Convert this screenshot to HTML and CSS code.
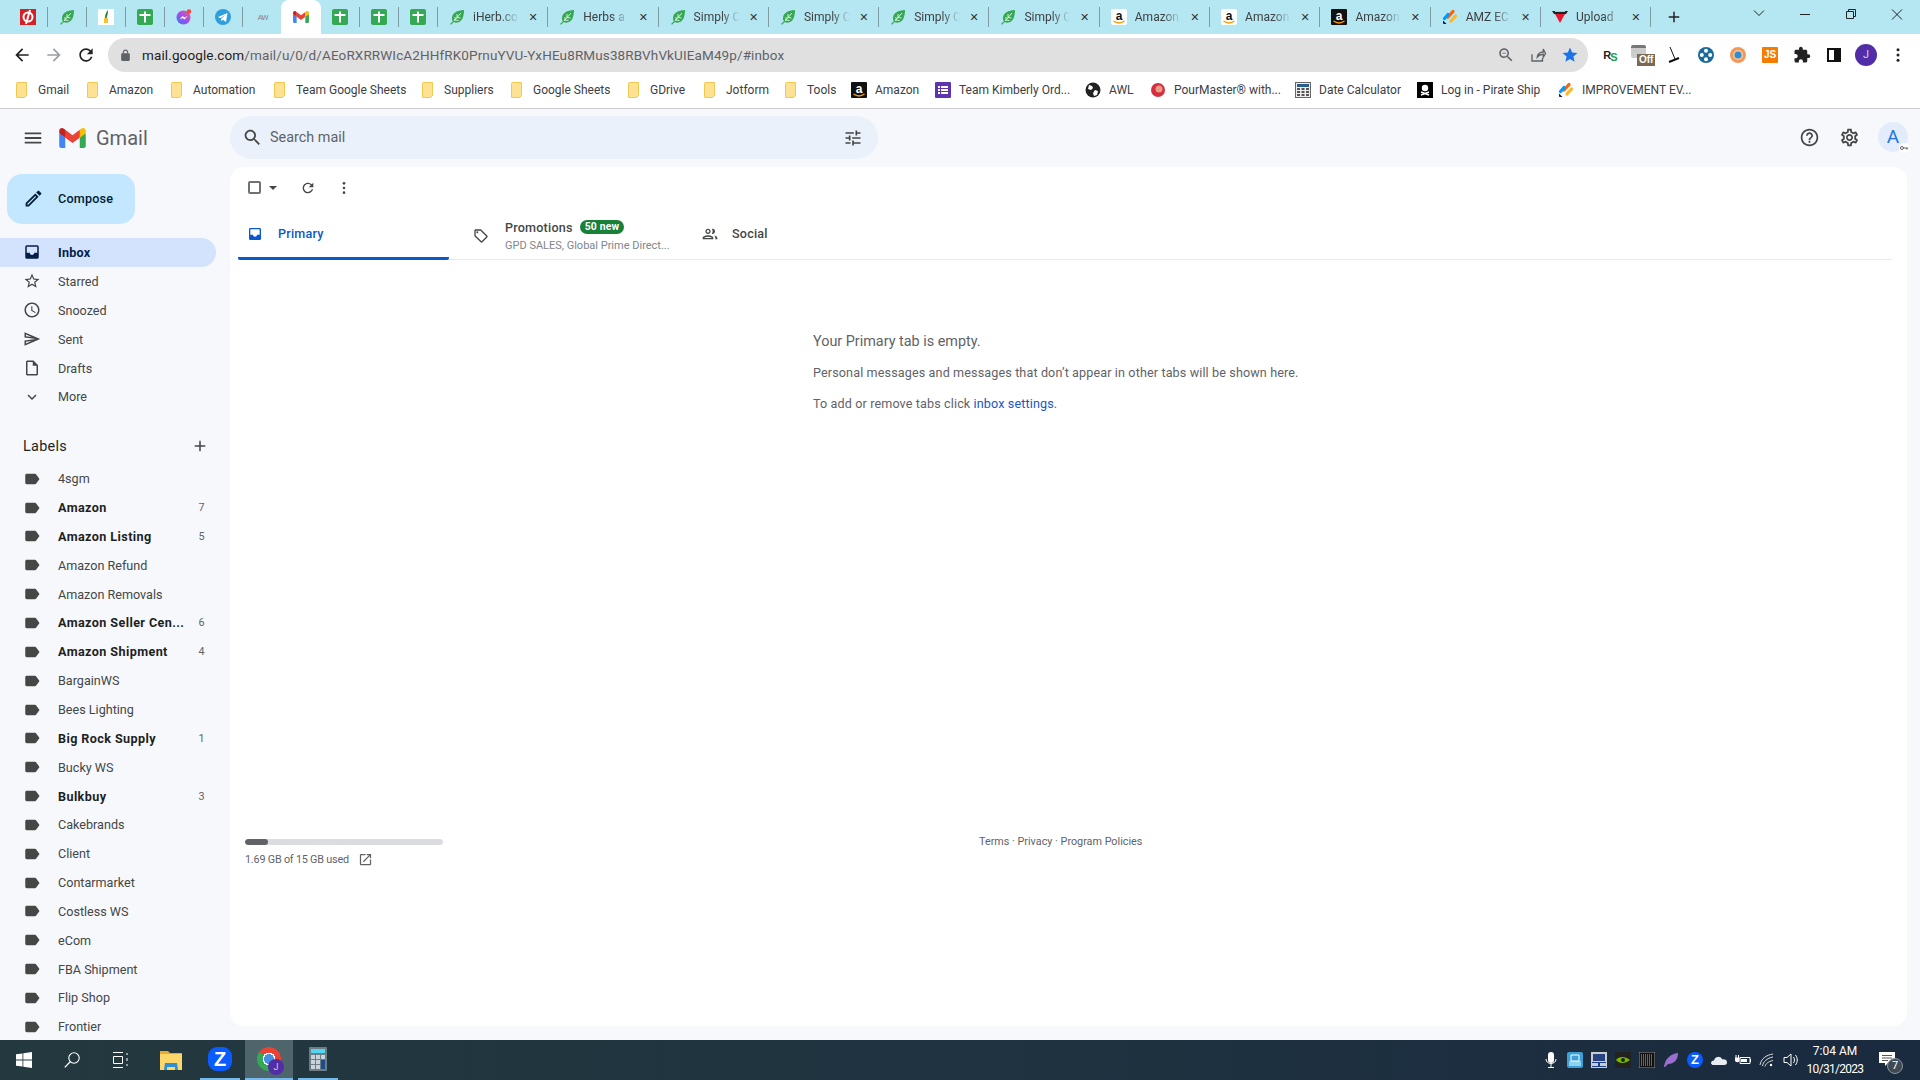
FILE: index.html
```html
<!doctype html>
<html>
<head>
<meta charset="utf-8">
<title>Inbox - Gmail</title>
<link rel="stylesheet" href="styles.css">
</head>

<body>
<svg class="sprite" xmlns="http://www.w3.org/2000/svg">
	<symbol id="i-menu" viewBox="0 0 24 24"><path d="M3 18h18v-2H3v2zm0-5h18v-2H3v2zm0-7v2h18V6H3z"/></symbol>
	<symbol id="i-search" viewBox="0 0 24 24"><path d="M15.5 14h-.79l-.28-.27C15.41 12.59 16 11.11 16 9.5 16 5.91 13.09 3 9.5 3S3 5.91 3 9.5 5.91 16 9.5 16c1.61 0 3.09-.59 4.23-1.57l.27.28v.79l5 4.99L20.49 19l-4.99-5zm-6 0C7.01 14 5 11.99 5 9.5S7.01 5 9.5 5 14 7.01 14 9.5 11.99 14 9.5 14z"/></symbol>
	<symbol id="i-tune" viewBox="0 0 24 24"><path d="M3 17v2h6v-2H3zM3 5v2h10V5H3zm10 16v-2h8v-2h-8v-2h-2v6h2zM7 9v2H3v2h4v2h2V9H7zm14 4v-2H11v2h10zm-6-4h2V7h4V5h-4V3h-2v6z"/></symbol>
	<symbol id="i-refresh" viewBox="0 0 24 24"><path d="M17.65 6.35A7.958 7.958 0 0 0 12 4c-4.42 0-7.99 3.58-7.99 8s3.57 8 7.99 8c3.73 0 6.84-2.55 7.73-6h-2.08A5.99 5.99 0 0 1 12 18c-3.31 0-6-2.69-6-6s2.69-6 6-6c1.66 0 3.14.69 4.22 1.78L13 11h7V4l-2.35 2.35z"/></symbol>
	<symbol id="i-dots" viewBox="0 0 24 24"><circle cx="12" cy="5" r="2"/><circle cx="12" cy="12" r="2"/><circle cx="12" cy="19" r="2"/></symbol>
	<symbol id="i-inbox" viewBox="0 0 24 24"><path d="M19 3H5a2 2 0 0 0-2 2v14a2 2 0 0 0 2 2h14a2 2 0 0 0 2-2V5a2 2 0 0 0-2-2zm0 10h-4c0 1.66-1.34 3-3 3s-3-1.34-3-3H5V5h14z"/></symbol>
	<symbol id="i-star" viewBox="0 0 24 24"><path d="M22 9.24l-7.19-.62L12 2 9.19 8.63 2 9.24l5.46 4.73L5.82 21 12 17.27 18.18 21l-1.63-7.03L22 9.24zM12 15.4l-3.76 2.27 1-4.28-3.32-2.88 4.38-.38L12 6.1l1.71 4.04 4.38.38-3.32 2.88 1 4.28L12 15.4z"/></symbol>
	<symbol id="i-clock" viewBox="0 0 24 24"><path d="M11.99 2C6.47 2 2 6.48 2 12s4.47 10 9.99 10C17.52 22 22 17.52 22 12S17.52 2 11.99 2zM12 20c-4.42 0-8-3.58-8-8s3.58-8 8-8 8 3.58 8 8-3.58 8-8 8zm.5-13H11v6l5.25 3.15.75-1.23-4.5-2.67z"/></symbol>
	<symbol id="i-send" viewBox="0 0 24 24"><path d="M4.01 6.03l7.51 3.22-7.52-1 .01-2.22m7.5 8.72L4 17.97v-2.22l7.51-1M2.01 3L2 10l15 2-15 2 .01 7L23 12 2.01 3z"/></symbol>
	<symbol id="i-draft" viewBox="0 0 24 24"><path d="M14 2H6c-1.1 0-1.99.9-1.99 2L4 20c0 1.1.89 2 1.99 2H18c1.1 0 2-.9 2-2V8l-6-6zM6 20V4h7v5h5v11H6z"/></symbol>
	<symbol id="i-more" viewBox="0 0 24 24"><path d="M16.59 8.59L12 13.17 7.41 8.59 6 10l6 6 6-6z"/></symbol>
	<symbol id="i-add" viewBox="0 0 24 24"><path d="M19 13h-6v6h-2v-6H5v-2h6V5h2v6h6v2z"/></symbol>
	<symbol id="i-label" viewBox="0 0 24 24"><path d="M17.63 5.84C17.27 5.33 16.67 5 16 5L5 5.01C3.9 5.01 3 5.9 3 7v10c0 1.1.9 1.99 2 1.99L16 19c.67 0 1.27-.33 1.63-.84L22 12l-4.37-6.16z"/></symbol>
	<symbol id="i-edit" viewBox="0 0 24 24"><path d="M3 17.25V21h3.75L17.81 9.94l-3.75-3.75L3 17.25zM5.92 19H5v-.92l9.06-9.06.92.92L5.92 19zM20.71 5.63l-2.34-2.34a1 1 0 0 0-1.41 0l-1.83 1.83 3.75 3.75 1.83-1.83a1 1 0 0 0 0-1.41z"/></symbol>
	<symbol id="i-tag" viewBox="0 0 24 24"><path d="M21.41 11.41l-8.83-8.83C12.21 2.21 11.7 2 11.17 2H4c-1.1 0-2 .9-2 2v7.17c0 .53.21 1.04.59 1.41l8.83 8.83c.78.78 2.05.78 2.83 0l7.17-7.17c.78-.78.78-2.04-.01-2.83zM12.83 20L4 11.17V4h7.17L20 12.83 12.83 20z"/><circle cx="6.5" cy="6.5" r="1.5"/></symbol>
	<symbol id="i-people" viewBox="0 0 24 24"><path d="M9 12c2.2 0 4-1.800 4-4s-1.800-4-4-4-4 1.800-4 4 1.800 4 4 4zm0-6c1.100 0 2 .9 2 2s-.9 2-2 2-2-.9-2-2 .9-2 2-2zm0 8c-2.700 0-8 1.300-8 4v2h16v-2c0-2.700-5.300-4-8-4zm-6 4c.2-.7 3.300-2 6-2s5.800 1.300 6 2H3zM16 12c1.900 0 3.500-1.600 3.500-4S17.900 4 16 4c-.5 0-.9.1-1.300.3.800 1 1.300 2.300 1.300 3.700s-.5 2.700-1.300 3.700c.4.200.8.300 1.300.300zm2 2.300c1.300.8 2 2 2 3.700v2h3v-2c0-2.300-2.900-3.300-5-3.700z"/></symbol>
	<symbol id="i-help" viewBox="0 0 24 24"><path d="M11 18h2v-2h-2v2zm1-16C6.480 2 2 6.480 2 12s4.480 10 10 10 10-4.480 10-10S17.520 2 12 2zm0 18c-4.410 0-8-3.590-8-8s3.590-8 8-8 8 3.590 8 8-3.590 8-8 8zm0-14c-2.210 0-4 1.790-4 4h2c0-1.100.9-2 2-2s2 .9 2 2c0 2-3 1.750-3 5h2c0-2.250 3-2.500 3-5 0-2.210-1.790-4-4-4z"/></symbol>
	<symbol id="i-gear" viewBox="0 0 24 24"><path d="M19.43 12.98c.04-.32.07-.64.07-.98 0-.34-.03-.66-.07-.98l2.11-1.65c.19-.15.24-.42.12-.64l-2-3.46a.5.5 0 0 0-.61-.22l-2.49 1c-.52-.4-1.08-.73-1.69-.98l-.38-2.65A.488.488 0 0 0 14 2h-4c-.25 0-.46.18-.49.42l-.38 2.65c-.61.25-1.17.59-1.69.98l-2.49-1a.566.566 0 0 0-.18-.03c-.17 0-.34.09-.43.25l-2 3.46c-.13.22-.07.49.12.64l2.11 1.65c-.04.32-.07.65-.07.98 0 .33.03.66.07.98l-2.11 1.65c-.19.15-.24.42-.12.64l2 3.46a.5.5 0 0 0 .61.22l2.49-1c.52.4 1.08.73 1.69.98l.38 2.65c.03.24.24.42.49.42h4c.25 0 .46-.18.49-.42l.38-2.65c.61-.25 1.17-.59 1.69-.98l2.49 1c.06.02.12.03.18.03.17 0 .34-.09.43-.25l2-3.46c.12-.22.07-.49-.12-.64l-2.11-1.65zm-1.98-1.71c.04.31.05.52.05.73 0 .21-.02.43-.05.73l-.14 1.13.89.7 1.08.84-.7 1.21-1.27-.51-1.04-.42-.9.68c-.43.32-.84.56-1.25.73l-1.06.43-.16 1.13-.2 1.35h-1.4l-.19-1.35-.16-1.13-1.06-.43c-.43-.18-.83-.41-1.23-.71l-.91-.7-1.06.43-1.27.51-.7-1.21 1.08-.84.89-.7-.14-1.13c-.03-.31-.05-.54-.05-.74s.02-.43.05-.73l.14-1.13-.89-.7-1.08-.84.7-1.21 1.27.51 1.04.42.9-.68c.43-.32.84-.56 1.25-.73l1.06-.43.16-1.13.2-1.35h1.39l.19 1.35.16 1.13 1.06.43c.43.18.83.41 1.23.71l.91.7 1.06-.43 1.27-.51.7 1.21-1.07.85-.89.7.14 1.13zM12 8c-2.21 0-4 1.79-4 4s1.79 4 4 4 4-1.79 4-4-1.79-4-4-4zm0 6c-1.1 0-2-.9-2-2s.9-2 2-2 2 .9 2 2-.9 2-2 2z"/></symbol>
	<symbol id="i-open" viewBox="0 0 24 24"><path d="M19 19H5V5h7V3H5c-1.110 0-2 .9-2 2v14c0 1.100.89 2 2 2h14c1.100 0 2-.9 2-2v-7h-2v7zM14 3v2h3.590l-9.830 9.830 1.410 1.410L19 6.410V10h2V3h-7z"/></symbol>
	<symbol id="i-back" viewBox="0 0 24 24"><path d="M20 11H7.830l5.590-5.590L12 4l-8 8 8 8 1.410-1.410L7.830 13H20v-2z"/></symbol>
	<symbol id="i-forward" viewBox="0 0 24 24"><path d="M12 4l-1.410 1.410L16.170 11H4v2h12.170l-5.580 5.590L12 20l8-8z"/></symbol>
	<symbol id="i-lock" viewBox="0 0 24 24"><path d="M18 8h-1V6c0-2.760-2.240-5-5-5S7 3.240 7 6v2H6c-1.100 0-2 .9-2 2v10c0 1.100.9 2 2 2h12c1.100 0 2-.9 2-2V10c0-1.100-.9-2-2-2zM9 6c0-1.660 1.340-3 3-3s3 1.340 3 3v2H9V6z"/></symbol>
	<symbol id="i-starfill" viewBox="0 0 24 24"><path d="M12 17.270L18.180 21l-1.640-7.030L22 9.240l-7.190-.61L12 2 9.190 8.630 2 9.240l5.460 4.730L5.820 21z"/></symbol>
	<symbol id="i-puzzle" viewBox="0 0 24 24"><path d="M20.500 11H19V7c0-1.100-.9-2-2-2h-4V3.500C13 2.120 11.880 1 10.500 1S8 2.120 8 3.500V5H4c-1.100 0-1.990.9-1.990 2v3.800H3.500c1.490 0 2.700 1.210 2.700 2.700s-1.210 2.700-2.700 2.700H2V20c0 1.100.9 2 2 2h3.800v-1.500c0-1.490 1.210-2.700 2.700-2.700 1.490 0 2.700 1.210 2.700 2.700V22H17c1.100 0 2-.9 2-2v-4h1.500c1.380 0 2.500-1.120 2.500-2.500S21.880 11 20.500 11z"/></symbol>
	<symbol id="i-share" viewBox="0 0 24 24"><path fill="none" stroke="currentColor" stroke-width="1.800" d="M4 11v9h14v-4M11 15c0-4 3-7 8-7V4l3 6-3 5v-4c-4 0-6 1-8 4z"/></symbol>
	<symbol id="i-zoom" viewBox="0 0 24 24"><path d="M15.500 14h-.79l-.28-.27C15.410 12.590 16 11.110 16 9.500 16 5.910 13.090 3 9.500 3S3 5.910 3 9.500 5.910 16 9.500 16c1.610 0 3.090-.59 4.230-1.570l.27.28v.79l5 4.990L20.490 19l-4.990-5zm-6 0C7.010 14 5 11.990 5 9.500S7.010 5 9.500 5 14 7.010 14 9.500 11.990 14 9.500 14zM7 9h5v1H7z"/></symbol>

	<symbol id="f-leaf" viewBox="0 0 16 16"><path fill="#35a852" d="M15 1C8 1.500 3.500 3.500 3 9c-.1 1.300.3 2.400.9 3.200L1 15l1 .8 2.800-2.800c1 .6 2.300.8 3.700.5C13.500 12.500 15 7 15 1z"/><path fill="none" stroke="#fff" stroke-width=".8" d="M5 12l7-8M8 8.500V5M8 8.500l3.500.5M6 11V8M6 11l3.500.5"/></symbol>
	<symbol id="f-sheet" viewBox="0 0 16 16"><rect width="16" height="16" rx="2" fill="#34a853"/><path fill="#fff" d="M7 2.500h2V5h4.500v2H9v6.500H7V7H2.500V5H7z"/></symbol>
	<symbol id="f-smile" viewBox="0 0 16 16"><path fill="none" stroke="#f90" stroke-width="1.500" d="M2.500 12c3.500 2.500 7.500 2.500 11 0"/></symbol>
	<symbol id="f-jot" viewBox="0 0 16 16"><path stroke-width="3.200" stroke-linecap="round" stroke="#ff6100" d="M6 8l5-5.500"/><path stroke-width="3.200" stroke-linecap="round" stroke="#0099ff" d="M2.500 9.500L6 5.500"/><path stroke-width="3.200" stroke-linecap="round" stroke="#ffb629" d="M9 12l4.500-5"/><path fill="#0a1551" d="M1 11.500L4.500 15H2a1 1 0 0 1-1-1z"/></symbol>
	<symbol id="f-gmail" viewBox="0 0 256 193"><path fill="#4285f4" d="M58.180 192.050V93.140L27.500 65.080 0 49.500v125.090c0 9.660 7.830 17.460 17.450 17.460h40.730z"/><path fill="#34a853" d="M197.820 192.050h40.730c9.660 0 17.450-7.830 17.450-17.450V49.500l-31.160 17.840-27.020 25.800v98.910z"/><path fill="#ea4335" d="M58.180 93.140l-4.170-38.650 4.170-36.990L128 69.870l69.820-52.370 4.670 34.990-4.670 40.650L128 145.500z"/><path fill="#fbbc04" d="M197.820 17.500V93.140L256 49.500V26.230c0-21.590-24.640-33.890-41.890-20.950L197.820 17.500z"/><path fill="#c5221f" d="M0 49.500l26.760 20.070L58.180 93.140V17.500L41.890 5.280C24.610-7.660 0 4.640 0 26.230V49.500z"/></symbol>
	<symbol id="f-folder" viewBox="0 0 12 16"><path fill="#fde293" stroke="#f2c94c" stroke-width="1" d="M.5 1.500a1 1 0 0 1 1-1h9v13l-2 2h-7.500a.5.5 0 0 1-.5-.5z"/></symbol>
</svg>

<div class="tabstrip">
	<div class="tab pin"><svg class="fav" viewBox="0 0 16 16"><rect width="16" height="16" fill="#d71f26"/><circle cx="8" cy="8" r="4.500" fill="none" stroke="#fff" stroke-width="2"/><path stroke="#fff" stroke-width="2" d="M6 15L10 1"/></svg></div>
	<div class="tab pin"><svg class="fav"><use href="#f-leaf"/></svg></div>
	<div class="tab pin"><svg class="fav" viewBox="0 0 16 16"><rect width="16" height="16" fill="#fff"/><path fill="#1e7d34" d="M10 1c-2 2-3 5-3 8l1 1c1-2 2-5 2-9z"/><path fill="#f2c230" d="M6 9h4v5H6z"/></svg></div>
	<div class="tab pin"><svg class="fav"><use href="#f-sheet"/></svg></div>
	<div class="tab pin"><svg class="fav" viewBox="0 0 16 16"><defs><linearGradient id="mg" x1="0" y1="1" x2="1" y2="0"><stop offset="0" stop-color="#2f7bf6"/><stop offset=".5" stop-color="#a24cf0"/><stop offset="1" stop-color="#f5617e"/></linearGradient></defs><circle cx="7.500" cy="8.500" r="7" fill="url(#mg)"/><path fill="#fff" d="M3.500 10.500l3-3.500 2 1.500 3-1.500-3 3.500-2-1.500z"/><circle cx="13" cy="2.500" r="2.300" fill="#ef4b3e"/></svg></div>
	<div class="tab pin"><svg class="fav" viewBox="0 0 16 16"><circle cx="8" cy="8" r="8" fill="#2e9fdc"/><path fill="#fff" d="M3 8l9.500-4-1.500 9-3-2.200-1.500 1.500-.4-2.600 4.400-3.700-5.400 3.300z"/></svg></div>
	<div class="tab pin no-sep"><span class="fav-aw">AW</span></div>
	<div class="tab active"><svg class="fav-m"><use href="#f-gmail"/></svg></div>
	<div class="tab pin"><svg class="fav"><use href="#f-sheet"/></svg></div>
	<div class="tab pin"><svg class="fav"><use href="#f-sheet"/></svg></div>
	<div class="tab pin"><svg class="fav"><use href="#f-sheet"/></svg></div>
	<div class="tab wide"><svg class="fav"><use href="#f-leaf"/></svg><span class="tab-title">iHerb.co</span><span class="tab-x">&#x2715;</span></div>
	<div class="tab wide"><svg class="fav"><use href="#f-leaf"/></svg><span class="tab-title">Herbs a</span><span class="tab-x">&#x2715;</span></div>
	<div class="tab wide"><svg class="fav"><use href="#f-leaf"/></svg><span class="tab-title">Simply C</span><span class="tab-x">&#x2715;</span></div>
	<div class="tab wide"><svg class="fav"><use href="#f-leaf"/></svg><span class="tab-title">Simply C</span><span class="tab-x">&#x2715;</span></div>
	<div class="tab wide"><svg class="fav"><use href="#f-leaf"/></svg><span class="tab-title">Simply C</span><span class="tab-x">&#x2715;</span></div>
	<div class="tab wide"><svg class="fav"><use href="#f-leaf"/></svg><span class="tab-title">Simply C</span><span class="tab-x">&#x2715;</span></div>
	<div class="tab wide"><svg class="fav" viewBox="0 0 16 16"><rect width="16" height="16" rx="2" fill="#fff"/><text x="8" y="10.500" text-anchor="middle" class="fav-a">a</text><use href="#f-smile"/></svg><span class="tab-title">Amazon</span><span class="tab-x">&#x2715;</span></div>
	<div class="tab wide"><svg class="fav" viewBox="0 0 16 16"><rect width="16" height="16" rx="2" fill="#fff"/><text x="8" y="10.500" text-anchor="middle" class="fav-a">a</text><use href="#f-smile"/></svg><span class="tab-title">Amazon</span><span class="tab-x">&#x2715;</span></div>
	<div class="tab wide"><svg class="fav" viewBox="0 0 16 16"><rect width="16" height="16" rx="1" fill="#111"/><text x="8" y="10.500" text-anchor="middle" class="fav-a fav-w">a</text><use href="#f-smile"/></svg><span class="tab-title">Amazon</span><span class="tab-x">&#x2715;</span></div>
	<div class="tab wide"><svg class="fav"><use href="#f-jot"/></svg><span class="tab-title">AMZ EC</span><span class="tab-x">&#x2715;</span></div>
	<div class="tab wide"><svg class="fav" viewBox="0 0 16 16"><path fill="#222" d="M0 2h16l-2 3H2z"/><path fill="#f0c030" d="M3 2h10v1H3z"/><path fill="#e8172c" d="M3 5h10l-5 9z"/></svg><span class="tab-title">Upload</span><span class="tab-x">&#x2715;</span></div>
	<svg class="new-tab"><use href="#i-add"/></svg>
	<div class="win-btns">
		<svg class="win-btn" viewBox="0 0 46 28"><path fill="none" stroke="#222" d="M18 10.500l5 5 5-5"/></svg>
		<svg class="win-btn" viewBox="0 0 46 28"><path stroke="#222" d="M18 14.500h10"/></svg>
		<svg class="win-btn" viewBox="0 0 46 28"><path fill="none" stroke="#222" d="M18.500 11.500h7v7h-7zM20.500 11.500v-2h7v7h-2"/></svg>
		<svg class="win-btn" viewBox="0 0 46 28"><path stroke="#222" d="M18 9.500l10 10M28 9.500l-10 10"/></svg>
	</div>
</div>

<div class="toolbar">
	<span class="nav-btn"><svg><use href="#i-back"/></svg></span>
	<span class="nav-btn off"><svg><use href="#i-forward"/></svg></span>
	<span class="nav-btn"><svg><use href="#i-refresh"/></svg></span>
	<div class="omnibox">
		<svg class="lock"><use href="#i-lock"/></svg>
		<span class="url"><b>mail.google.com</b>/mail/u/0/d/AEoRXRRWIcA2HHfRK0PrnuYVU-YxHEu8RMus38RBVhVkUIEaM49p/#inbox</span>
		<span class="omni-btn"><svg><use href="#i-zoom"/></svg></span>
		<span class="omni-btn"><svg><use href="#i-share"/></svg></span>
		<span class="omni-btn star"><svg><use href="#i-starfill"/></svg></span>
	</div>
	<div class="exts">
		<span class="ext"><span class="ext-rs">R<i>S</i></span></span>
		<span class="ext ext-off"><span class="off-can"></span><span class="off-tag">Off</span></span>
		<span class="ext"><svg class="ext-ic" viewBox="0 0 16 16"><path fill="none" stroke="#111" stroke-width="1" d="M4 0l5 12"/><path stroke="#111" stroke-width="2" d="M3 15l10-4"/></svg></span>
		<span class="ext"><svg class="ext-ic" viewBox="0 0 16 16"><circle cx="8" cy="8" r="8" fill="#1c6a9c"/><circle cx="8" cy="3.800" r="2" fill="#fff"/><circle cx="8" cy="12.200" r="2" fill="#fff"/><circle cx="3.800" cy="8" r="2" fill="#fff"/><circle cx="12.200" cy="8" r="2" fill="#fff"/></svg></span>
		<span class="ext"><svg class="ext-ic" viewBox="0 0 16 16"><circle cx="8" cy="8" r="8" fill="#f2995a"/><circle cx="8" cy="8" r="5" fill="#f9c89f"/><circle cx="8" cy="8" r="3.500" fill="#2b8fd6"/></svg></span>
		<span class="ext"><span class="ext-js">JS</span></span>
		<span class="ext"><svg class="ext-ic dark"><use href="#i-puzzle"/></svg></span>
		<span class="ext"><span class="ext-panel"></span></span>
		<span class="ext"><span class="ext-avatar">J</span></span>
		<span class="ext"><svg class="ext-ic dark"><use href="#i-dots"/></svg></span>
	</div>
</div>

<div class="bookmarks">
	<span class="bm"><svg class="bm-folder"><use href="#f-folder"/></svg>Gmail</span>
	<span class="bm"><svg class="bm-folder"><use href="#f-folder"/></svg>Amazon</span>
	<span class="bm"><svg class="bm-folder"><use href="#f-folder"/></svg>Automation</span>
	<span class="bm"><svg class="bm-folder"><use href="#f-folder"/></svg>Team Google Sheets</span>
	<span class="bm"><svg class="bm-folder"><use href="#f-folder"/></svg>Suppliers</span>
	<span class="bm"><svg class="bm-folder"><use href="#f-folder"/></svg>Google Sheets</span>
	<span class="bm"><svg class="bm-folder"><use href="#f-folder"/></svg>GDrive</span>
	<span class="bm"><svg class="bm-folder"><use href="#f-folder"/></svg>Jotform</span>
	<span class="bm"><svg class="bm-folder"><use href="#f-folder"/></svg>Tools</span>
	<span class="bm"><svg class="bm-ic" viewBox="0 0 16 16"><rect width="16" height="16" rx="1" fill="#111"/><text x="8" y="10.500" text-anchor="middle" class="fav-a fav-w">a</text><use href="#f-smile"/></svg>Amazon</span>
	<span class="bm"><svg class="bm-ic" viewBox="0 0 16 16"><rect width="16" height="16" rx="1" fill="#5e35b1"/><path fill="#fff" d="M3 4h2v2H3zM6 4h7v2H6zM3 7h2v2H3zM6 7h7v2H6zM3 10h2v2H3zM6 10h7v2H6z"/></svg>Team Kimberly Ord...</span>
	<span class="bm"><svg class="bm-ic" viewBox="0 0 16 16"><circle cx="8" cy="8" r="7.500" fill="#222"/><path fill="#fff" d="M4 3l3 1 1 2-2 2-3-1zM10 8l3 1-1 4-3 1-1-3z"/></svg>AWL</span>
	<span class="bm"><svg class="bm-ic" viewBox="0 0 16 16"><circle cx="8" cy="8" r="7" fill="#d32f3f"/><circle cx="9" cy="7" r="3.500" fill="#e98"/></svg>PourMaster® with...</span>
	<span class="bm"><svg class="bm-ic" viewBox="0 0 16 16"><rect x=".5" y=".5" width="15" height="15" fill="#eee" stroke="#666"/><path fill="#2a5d8f" d="M2 2h12v3H2z"/><path fill="#555" d="M2 6h3v2H2zM6.500 6h3v2h-3zM11 6h3v2h-3zM2 9h3v2H2zM6.500 9h3v2h-3zM11 9h3v2h-3zM2 12h3v2H2zM6.500 12h3v2h-3zM11 12h3v2h-3z"/></svg>Date Calculator</span>
	<span class="bm"><svg class="bm-ic" viewBox="0 0 16 16"><rect width="16" height="16" fill="#000"/><circle cx="8" cy="6" r="3.200" fill="#fff"/><path stroke="#fff" stroke-width="1.500" d="M4 10l8 3M12 10l-8 3"/></svg>Log in - Pirate Ship</span>
	<span class="bm"><svg class="bm-ic"><use href="#f-jot"/></svg>IMPROVEMENT EV...</span>
</div>

<div class="gmail">
	<div class="g-head">
		<div class="g-brand">
			<svg class="g-menu"><use href="#i-menu"/></svg>
			<svg class="g-logo"><use href="#f-gmail"/></svg>
			<span class="g-word">Gmail</span>
		</div>
		<div class="g-search">
			<svg class="g-search-ic"><use href="#i-search"/></svg>
			<span class="g-search-text">Search mail</span>
			<svg class="g-tune"><use href="#i-tune"/></svg>
		</div>
		<div class="g-tools">
			<svg class="g-tool"><use href="#i-help"/></svg>
			<svg class="g-tool"><use href="#i-gear"/></svg>
			<span class="g-account">A<span class="g-key"><svg viewBox="0 0 12 12"><circle cx="3.500" cy="6" r="1.800" fill="none" stroke="#444" stroke-width="1"/><path stroke="#444" stroke-width="1" d="M5 6h6M9.500 6v2"/></svg></span></span>
		</div>
	</div>

	<div class="g-body">
		<div class="side">
			<div class="compose"><svg><use href="#i-edit"/></svg><span>Compose</span></div>
			<ul class="nav">
				<li class="current"><svg><use href="#i-inbox"/></svg><span class="name">Inbox</span></li>
				<li><svg><use href="#i-star"/></svg><span class="name">Starred</span></li>
				<li><svg><use href="#i-clock"/></svg><span class="name">Snoozed</span></li>
				<li><svg><use href="#i-send"/></svg><span class="name">Sent</span></li>
				<li><svg><use href="#i-draft"/></svg><span class="name">Drafts</span></li>
				<li><svg><use href="#i-more"/></svg><span class="name">More</span></li>
			</ul>
			<div class="labels-head">Labels<svg><use href="#i-add"/></svg></div>
			<ul class="nav labels">
				<li><svg><use href="#i-label"/></svg><span class="name">4sgm</span></li>
				<li class="unread"><svg><use href="#i-label"/></svg><span class="name">Amazon</span><span class="count">7</span></li>
				<li class="unread"><svg><use href="#i-label"/></svg><span class="name">Amazon Listing</span><span class="count">5</span></li>
				<li><svg><use href="#i-label"/></svg><span class="name">Amazon Refund</span></li>
				<li><svg><use href="#i-label"/></svg><span class="name">Amazon Removals</span></li>
				<li class="unread"><svg><use href="#i-label"/></svg><span class="name">Amazon Seller Cen...</span><span class="count">6</span></li>
				<li class="unread"><svg><use href="#i-label"/></svg><span class="name">Amazon Shipment</span><span class="count">4</span></li>
				<li><svg><use href="#i-label"/></svg><span class="name">BargainWS</span></li>
				<li><svg><use href="#i-label"/></svg><span class="name">Bees Lighting</span></li>
				<li class="unread"><svg><use href="#i-label"/></svg><span class="name">Big Rock Supply</span><span class="count">1</span></li>
				<li><svg><use href="#i-label"/></svg><span class="name">Bucky WS</span></li>
				<li class="unread"><svg><use href="#i-label"/></svg><span class="name">Bulkbuy</span><span class="count">3</span></li>
				<li><svg><use href="#i-label"/></svg><span class="name">Cakebrands</span></li>
				<li><svg><use href="#i-label"/></svg><span class="name">Client</span></li>
				<li><svg><use href="#i-label"/></svg><span class="name">Contarmarket</span></li>
				<li><svg><use href="#i-label"/></svg><span class="name">Costless WS</span></li>
				<li><svg><use href="#i-label"/></svg><span class="name">eCom</span></li>
				<li><svg><use href="#i-label"/></svg><span class="name">FBA Shipment</span></li>
				<li><svg><use href="#i-label"/></svg><span class="name">Flip Shop</span></li>
				<li><svg><use href="#i-label"/></svg><span class="name">Frontier</span></li>
			</ul>
		</div>

		<div class="card">
			<div class="actions">
				<span class="check"></span><span class="caret"></span>
				<svg class="act-refresh"><use href="#i-refresh"/></svg>
				<svg class="act-dots"><use href="#i-dots"/></svg>
			</div>
			<div class="cats">
				<div class="cat cat-primary"><svg><use href="#i-inbox"/></svg>Primary</div>
				<div class="cat cat-promo">
					<svg><use href="#i-tag"/></svg>
					<div>
						<div class="promo-top">Promotions<span class="badge">50 new</span></div>
						<div class="promo-sub">GPD SALES, Global Prime Direct...</div>
					</div>
				</div>
				<div class="cat cat-social"><svg><use href="#i-people"/></svg>Social</div>
			</div>
			<div class="empty">
				<div class="empty-h">Your Primary tab is empty.</div>
				<p>Personal messages and messages that don’t appear in other tabs will be shown here.</p>
				<p>To add or remove tabs click <a>inbox settings</a>.</p>
			</div>
			<div class="foot">
				<div class="storage">
					<div class="bar"><div class="bar-fill"></div></div>
					<div class="used">1.69 GB of 15 GB used<svg><use href="#i-open"/></svg></div>
				</div>
				<div class="terms">Terms · Privacy · Program Policies</div>
			</div>
		</div>
	</div>
</div>

<div class="taskbar">
	<span class="tb tb-sys"><svg class="tb-ic" viewBox="0 0 16 16"><path fill="#fff" d="M0 2.300l6.500-.9v6.200H0zM7.300 1.300L16 0v7.600H7.300zM0 8.400h6.500v6.200L0 13.700zM7.300 8.400H16V16l-8.700-1.200z"/></svg></span>
	<span class="tb tb-sys"><svg class="tb-ic" viewBox="0 0 16 16"><circle cx="10" cy="6" r="5.200" fill="none" stroke="#fff" stroke-width="1.100"/><path stroke="#fff" stroke-width="1.300" d="M6.200 9.800L.8 15.400"/></svg></span>
	<span class="tb tb-sys"><svg class="tb-ic" viewBox="0 0 16 16"><path fill="none" stroke="#fff" stroke-width="1" d="M1 .5h10M1 15.500h10M1.500 4.500h9v7h-9zM15 1v2M15 6v3M15 12v2"/></svg></span>
	<span class="tb tb-folder"><svg viewBox="0 0 22 20"><path fill="#e8a92c" d="M0 1h8l2 2h12v3H0z"/><path fill="#fbd669" d="M0 4h22v16H0z"/><path fill="#2d8fd5" d="M4 20l1-7h12l1 7h-3v-3H7v3z"/></svg></span>
	<span class="tb tb-open tb-z"><span class="z-logo">Z</span></span>
	<span class="tb tb-open tb-chrome"><span class="chrome-logo"></span><span class="chrome-j">J</span></span>
	<span class="tb tb-open tb-calc"><svg viewBox="0 0 18 24"><rect width="18" height="24" rx="1" fill="#6d7c86"/><path fill="#4fd6f0" d="M2 2h14v4H2z"/><path fill="#c9d3d9" d="M2 8h4v4H2zM7 8h4v4H7zM12 8h4v4h-4zM2 13h4v4H2zM7 13h4v4H7zM2 18h4v4H2zM7 18h4v4H7z"/><path fill="#1b4d89" d="M12 13h4v9h-4z"/></svg></span>

	<div class="tray">
		<span class="tr"><svg viewBox="0 0 16 16"><rect x="5" y="0" width="6" height="11" rx="3" fill="#fff"/><path fill="none" stroke="#fff" d="M3 7c0 6 10 6 10 0M8 12v3M5 15.500h6"/></svg></span>
		<span class="tr"><svg viewBox="0 0 16 16"><rect width="16" height="16" rx="2" fill="#3c9fd8"/><path fill="#8fd2ee" d="M2 9h12v5H2z"/><path fill="none" stroke="#fff" d="M4 3h8v6H4z"/></svg></span>
		<span class="tr"><svg viewBox="0 0 16 16"><rect width="16" height="16" fill="#c9ccd1"/><path fill="#1c3f8f" d="M1 10h14v1H1zM1 14h6v1H1zM9 14h6v1H9zM7 11h2v4H7z"/><rect x="2" y="2" width="12" height="7" fill="#28437f"/></svg></span>
		<span class="tr"><svg viewBox="0 0 16 16"><rect width="16" height="16" rx="1" fill="#222"/><path fill="#76b900" d="M1 8c3-4 9-4 14 0-5 4-11 4-14 0z"/><circle cx="8" cy="8" r="2" fill="#222"/></svg></span>
		<span class="tr"><svg viewBox="0 0 16 16"><rect width="16" height="16" rx="1" fill="#111" stroke="#999"/><path stroke="#bbb" stroke-dasharray="1 1" d="M2 3h12M2 5h12M2 7h12M2 9h12M2 11h12M2 13h12"/></svg></span>
		<span class="tr"><svg viewBox="0 0 16 16"><path fill="#9a6fd0" d="M1 15C2 7 7 2 15 1c0 7-4 11-10 11l-3 3z"/></svg></span>
		<span class="tr"><span class="z-logo z-small">Z</span></span>
		<span class="tr"><svg viewBox="0 0 16 16"><path fill="#e8edf1" d="M0 11.500A3 3 0 0 1 3 8.500a4.500 4.500 0 0 1 8.500-1A3.200 3.200 0 0 1 16 10.500c0 1.500-1 2.500-2.500 2.500H1.500z"/></svg></span>
		<span class="tr"><svg viewBox="0 0 16 16"><path fill="none" stroke="#fff" d="M5 5.500h10v6H5zM15.500 7v3M0 8.500h3M1 3v3M3.500 3v3"/><path fill="#fff" d="M0 5.500h4.500V8a2 2 0 0 1-4.500 0zM6 7h6v3H6z"/></svg></span>
		<span class="tr"><svg viewBox="0 0 16 16"><path fill="none" stroke="#ddd" d="M1 13C2 7 7 3 14 2M3.500 14C4 10 8 6 14 5M6 14.500c.5-2.500 3-5 8-6"/><circle cx="12" cy="13" r="1.200" fill="#fff"/></svg></span>
		<span class="tr"><svg viewBox="0 0 16 16"><path fill="none" stroke="#fff" d="M1 5.500h3l4-3.500v12l-4-3.500H1zM10.500 5c1.300 1.800 1.300 4.200 0 6M12.500 3c2.300 3 2.300 7 0 10"/></svg></span>
	</div>
	<div class="clock"><div>7:04 AM</div><div class="date">10/31/2023</div></div>
	<div class="notif">
		<svg viewBox="0 0 16 14"><path fill="#fff" d="M0 0h16v11H9l-3 3v-3H0z"/><path stroke="#555" d="M3 3.500h10M3 6h10M3 8.500h6"/></svg>
		<span class="notif-n">7</span>
	</div>
</div>
</body>
</html>
```

FILE: styles.css
```css
*{
	margin: 0;
	padding: 0;
	box-sizing: border-box;
}
html,body{
	width: 1920px;
	height: 1080px;
	overflow: hidden;
}
body{
	display: flex;
	flex-direction: column;
	font-family: Roboto, "Liberation Sans", sans-serif;
	background: #f6f8fc;
	color: #444746;
}
ul{
	list-style: none;
}
svg{
	display: block;
	flex: none;
	fill: currentColor;
}
.sprite{
	width: 0;
	height: 0;
	position: absolute;
}

/* chrome tabs */
.tabstrip{
	height: 34px;
	flex: none;
	display: flex;
	align-items: flex-start;
	padding-left: 9px;
	background: #b5e7f3;
}
.tab{
	height: 20px;
	margin-top: 7px;
	display: flex;
	align-items: center;
	border-right: 1px solid #7f9ca5;
}
.tab.pin{
	width: 39px;
	justify-content: center;
}
.tab.no-sep{
	border-right: 0;
}
.tab.active{
	width: 40px;
	height: 34px;
	margin: 0 0 0 -1px;
	justify-content: center;
	background: #fff;
	border: 0;
	border-radius: 8px 8px 0 0;
}
.tab.wide{
	width: 110.3px;
	padding-left: 11px;
}
.fav{
	width: 16px;
	height: 16px;
}
.fav-m{
	width: 16px;
	height: 12px;
}
.fav-a{
	font: 700 12px "Liberation Sans", sans-serif;
	fill: #111;
}
.fav-w{
	fill: #fff;
}
.fav-aw{
	font-size: 8px;
	color: #8a7f92;
	letter-spacing: -1px;
}
.tab-title{
	width: 46px;
	margin: 0 6px 0 8px;
	font-size: 12px;
	color: #3c4043;
	white-space: nowrap;
	overflow: hidden;
	-webkit-mask-image: linear-gradient(90deg, #000 60%, transparent);
	mask-image: linear-gradient(90deg, #000 60%, transparent);
}
.tab-x{
	width: 16px;
	font-size: 11px;
	font-weight: 700;
	font-family: "DejaVu Sans", sans-serif;
	text-align: center;
	color: #333;
}
.new-tab{
	width: 18px;
	height: 18px;
	margin: 8px 0 0 14px;
	color: #222;
}
.win-btns{
	display: flex;
	margin-left: auto;
}
.win-btn{
	width: 46px;
	height: 28px;
}

/* chrome toolbar */
.toolbar{
	height: 38px;
	flex: none;
	display: flex;
	align-items: center;
	padding: 4px 0 0 6px;
	background: #fff;
}
.nav-btn{
	width: 32px;
	display: flex;
	justify-content: center;
	color: #222;
}
.nav-btn svg{
	width: 20px;
	height: 20px;
}
.nav-btn.off{
	color: #9aa0a6;
}
.omnibox{
	width: 1480px;
	height: 34px;
	margin-left: 6px;
	padding: 0 2px 0 11px;
	display: flex;
	align-items: center;
	background: #e0e0e0;
	border-radius: 17px;
	color: #5f6368;
}
.lock{
	width: 13px;
	height: 13px;
}
.url{
	flex: 1;
	margin-left: 10px;
	font-size: 13.5px;
	letter-spacing: .12px;
	white-space: nowrap;
}
.url b{
	font-weight: 400;
	color: #202124;
}
.omni-btn{
	width: 32px;
	display: flex;
	justify-content: center;
}
.omni-btn svg{
	width: 18px;
	height: 18px;
}
.omni-btn.star{
	color: #1a73e8;
}
.exts{
	display: flex;
	margin-left: 6px;
}
.ext{
	width: 32px;
	height: 28px;
	display: flex;
	align-items: center;
	justify-content: center;
	position: relative;
}
.ext-ic{
	width: 16px;
	height: 16px;
}
.ext-ic.dark{
	width: 18px;
	height: 18px;
	color: #222;
}
.ext-rs{
	font: 700 11px "Liberation Sans", sans-serif;
	letter-spacing: -1px;
	color: #222;
}
.ext-rs i{
	font-style: normal;
	color: #1e9e4a;
	position: relative;
	top: 2px;
}
.off-can{
	width: 15px;
	height: 13px;
	margin: -8px 0 0 -8px;
	background: #ccc;
	border-top: 3px solid #777;
	border-radius: 2px;
}
.off-tag{
	position: absolute;
	left: 11px;
	top: 13px;
	padding: 0 2px;
	background: #7b6a53;
	color: #fff;
	font: 700 10px/12px "Liberation Sans", sans-serif;
}
.ext-js{
	width: 16px;
	height: 16px;
	background: #f57c00;
	color: #fff;
	border-radius: 1px;
	font: 700 10px/16px "Liberation Sans", sans-serif;
	text-align: center;
}
.ext-panel{
	width: 14px;
	height: 14px;
	border: 2px solid #111;
	border-right-width: 7px;
}
.ext-avatar{
	width: 22px;
	height: 22px;
	background: #512da8;
	color: #d9cdf5;
	border-radius: 50%;
	font-size: 11px;
	line-height: 22px;
	text-align: center;
}

/* bookmarks, one column per bookmark */
.bookmarks{
	height: 37px;
	flex: none;
	display: grid;
	grid-template-columns: 71px 84px 103px 148px 89px 117px 76px 81px 66px 84px 150px 65px 145px 122px 141px auto;
	align-items: center;
	padding-left: 16px;
	background: #fff;
	border-bottom: 1px solid #ccc;
	font-size: 12px;
	color: #3c4043;
}
.bm{
	display: flex;
	align-items: center;
	white-space: nowrap;
}
.bm-folder{
	width: 12px;
	height: 16px;
	margin-right: 10px;
}
.bm-ic{
	width: 16px;
	height: 16px;
	margin-right: 8px;
}

/* gmail */
.gmail{
	flex: 1;
	min-height: 0;
	display: flex;
	flex-direction: column;
}
.g-head{
	height: 58px;
	flex: none;
	display: flex;
}
.g-brand{
	width: 230px;
	height: 58px;
	display: flex;
	align-items: center;
	padding-left: 22px;
	color: #444746;
}
.g-menu{
	width: 22px;
	height: 22px;
}
.g-logo{
	width: 27px;
	height: 20px;
	margin-left: 15px;
}
.g-word{
	margin-left: 10px;
	font-size: 20px;
	color: #5f6368;
}
.g-search{
	width: 648px;
	height: 43px;
	margin-top: 7px;
	padding: 0 15px 0 12px;
	display: flex;
	align-items: center;
	background: #eaf1fb;
	border-radius: 22px;
}
.g-search-ic{
	width: 21px;
	height: 21px;
}
.g-search-text{
	flex: 1;
	margin-left: 7px;
	font-size: 14.4px;
	color: #5f6368;
}
.g-tune{
	width: 20px;
	height: 20px;
}
.g-tools{
	margin-left: auto;
	padding-right: 12px;
	display: flex;
	align-items: center;
	height: 56px;
}
.g-tool{
	width: 21px;
	height: 21px;
	margin-right: 19px;
	color: #444746;
}
.g-account{
	width: 30px;
	height: 30px;
	margin-left: -1px;
	position: relative;
	background: #e3ecfa;
	border-radius: 50%;
	color: #1a73e8;
	font-size: 19px;
	line-height: 30px;
	text-align: center;
}
.g-key{
	position: absolute;
	right: -1px;
	bottom: -1px;
	width: 10px;
	height: 10px;
	background: #fff;
	border-radius: 50%;
}
.g-key svg{
	width: 10px;
	height: 10px;
}
.g-body{
	flex: 1;
	min-height: 0;
	display: flex;
}
.side{
	width: 230px;
	flex: none;
	overflow: hidden;
}
.compose{
	width: 128px;
	height: 50px;
	margin: 7px 0 14px 7px;
	padding: 0 0 2px 16px;
	display: flex;
	align-items: center;
	background: #c2e7ff;
	border-radius: 15px;
	color: #001d35;
	font-size: 12.6px;
	font-weight: 500;
	letter-spacing: .2px;
}
.compose svg{
	width: 21px;
	height: 21px;
	margin-right: 14px;
}
.nav li{
	height: 28.9px;
	width: 216px;
	padding-left: 23px;
	display: flex;
	align-items: center;
	border-radius: 0 15px 15px 0;
	font-size: 12.6px;
}
.nav li svg{
	width: 18px;
	height: 18px;
	margin-right: 17px;
	color: #444746;
}
.nav li.current{
	background: #d3e3fd;
	color: #041e49;
	font-weight: 700;
	letter-spacing: .25px;
}
.nav li.current svg{
	color: #041e49;
}
.nav li.unread{
	color: #1f1f1f;
	font-weight: 700;
	letter-spacing: .4px;
}
.name{
	width: 124px;
	white-space: nowrap;
}
.count{
	margin-left: auto;
	padding-right: 11px;
	font-size: 10.8px;
	font-weight: 400;
	color: #5f6368;
}
.labels-head{
	height: 38px;
	margin-top: 16px;
	padding: 0 21px 0 23px;
	display: flex;
	align-items: center;
	justify-content: space-between;
	font-size: 14.4px;
	font-weight: 400;
	letter-spacing: .3px;
	color: #1f1f1f;
}
.labels-head svg{
	width: 18px;
	height: 18px;
	color: #444746;
}
.labels{
	margin-top: -1px;
}
.labels li{
	height: 28.85px;
}
.card{
	flex: 1;
	margin: 0 13px 14px 0;
	display: flex;
	flex-direction: column;
	background: #fff;
	border-radius: 14px;
}
.actions{
	height: 43px;
	flex: none;
	padding: 0 0 2px 18px;
	display: flex;
	align-items: center;
	color: #444746;
}
.check{
	width: 13px;
	height: 13px;
	border: 2px solid #6e7276;
	border-radius: 2px;
}
.caret{
	margin-left: 8px;
	border: 4px solid transparent;
	border-top-color: #444746;
	border-bottom: 0;
}
.act-refresh{
	width: 16px;
	height: 16px;
	margin-left: 23px;
}
.act-dots{
	width: 16px;
	height: 16px;
	margin-left: 20px;
}
.cats{
	height: 50px;
	flex: none;
	margin: 0 15px 0 8px;
	display: flex;
	border-bottom: 1px solid #e8eaed;
	font-size: 12.6px;
	font-weight: 500;
	letter-spacing: .2px;
}
.cat{
	height: 50px;
	display: flex;
	align-items: center;
	color: #444746;
}
.cat svg{
	width: 16px;
	height: 16px;
}
.cat-primary{
	width: 211px;
	padding: 0 0 0 9px;
	color: #0b57d0;
	border-bottom: 3px solid #0b57d0;
	border-radius: 0 0 2px 2px;
}
.cat-primary svg{
	width: 16px;
	height: 16px;
	margin-right: 15px;
}
.cat-promo{
	width: 238px;
	padding: 1px 0 0 24px;
}
.cat-promo > svg{
	margin-right: 16px;
}
.promo-top{
	display: flex;
	align-items: center;
}
.badge{
	margin-left: 7px;
	padding: 0 5px;
	height: 14px;
	background: #188038;
	color: #fff;
	border-radius: 7px;
	font-size: 10.4px;
	font-weight: 700;
	line-height: 14px;
}
.promo-sub{
	margin-top: 4px;
	font-size: 11px;
	font-weight: 400;
	letter-spacing: 0;
	color: #80868b;
	white-space: nowrap;
}
.cat-social{
	padding: 0 0 3px 15px;
}
.cat-social svg{
	margin-right: 14px;
}
.empty{
	height: 579px;
	flex: none;
	padding: 72px 0 0 583px;
	color: #5f6368;
	font-size: 12.6px;
}
.empty-h{
	height: 20px;
	font-size: 14.4px;
	line-height: 20px;
}
.empty p{
	margin-top: 11px;
	line-height: 20px;
	letter-spacing: .12px;
}
.empty a{
	color: #1a56c4;
}
.foot{
	padding-left: 15px;
	display: flex;
	font-size: 10.8px;
	color: #5f6368;
}
.storage{
	width: 734px;
}
.bar{
	width: 198px;
	height: 6px;
	background: #dadce0;
	border-radius: 3px;
	overflow: hidden;
}
.bar-fill{
	width: 23px;
	height: 6px;
	background: #5f6368;
	border-radius: 3px;
}
.used{
	margin-top: 7px;
	display: flex;
	align-items: center;
	letter-spacing: -.2px;
}
.used svg{
	width: 15px;
	height: 15px;
	margin-left: 9px;
}
.terms{
	margin-top: -4px;
}

/* windows taskbar */
.taskbar{
	height: 40px;
	flex: none;
	display: flex;
	background: linear-gradient(90deg, #24383f, #1f3340 50%, #1a2a3f);
}
.tb{
	height: 40px;
	display: flex;
	align-items: center;
	justify-content: center;
	position: relative;
}
.tb-sys{
	width: 48px;
}
.tb-ic{
	width: 16px;
	height: 16px;
}
.tb-folder{
	width: 40px;
	margin-left: 7px;
}
.tb-folder svg{
	width: 22px;
	height: 20px;
}
.tb-open{
	border-bottom: 2px solid #76b9ed;
}
.tb-z{
	width: 40px;
	margin-left: 9px;
}
.z-logo{
	width: 24px;
	height: 24px;
	background: #0b5cff;
	border-radius: 9px;
	color: #fff;
	font: 700 20px/24px "Liberation Sans", sans-serif;
	text-align: center;
}
.z-small{
	width: 16px;
	height: 16px;
	border-radius: 50%;
	font-size: 13px;
	line-height: 16px;
}
.tb-chrome{
	width: 48px;
	margin-left: 5px;
	background: #4e656b;
}
.chrome-logo{
	width: 24px;
	height: 24px;
	border-radius: 50%;
	background: radial-gradient(circle, #4a90e2 0 5px, #fff 5px 6.500px, transparent 6.500px), conic-gradient(#ea4335 0 33%, #fbbc04 33% 50%, #34a853 50% 85%, #ea4335 85%);
}
.chrome-j{
	position: absolute;
	left: 23px;
	top: 19px;
	width: 16px;
	height: 16px;
	background: #512da8;
	color: #d9cdf5;
	border-radius: 50%;
	font-size: 9px;
	line-height: 16px;
	text-align: center;
}
.tb-calc{
	width: 40px;
	margin-left: 5px;
}
.tb-calc svg{
	width: 18px;
	height: 24px;
}
.tray{
	margin-left: auto;
	display: flex;
}
.tr{
	width: 24px;
	height: 40px;
	display: flex;
	align-items: center;
	justify-content: center;
}
.tr svg{
	width: 16px;
	height: 16px;
}
.clock{
	width: 64px;
	padding-top: 2px;
	color: #fff;
	font-size: 12px;
	line-height: 18px;
	text-align: center;
	white-space: nowrap;
}
.date{
	letter-spacing: -.7px;
}
.notif{
	width: 40px;
	margin-right: 13px;
	position: relative;
	display: flex;
	justify-content: center;
	padding-top: 12px;
}
.notif svg{
	width: 16px;
	height: 14px;
}
.notif-n{
	position: absolute;
	left: 20px;
	top: 18px;
	width: 16px;
	height: 16px;
	background: #3d4a55;
	border: 1px solid #8a949c;
	border-radius: 50%;
	color: #fff;
	font-size: 11px;
	line-height: 14px;
	text-align: center;
}
```
